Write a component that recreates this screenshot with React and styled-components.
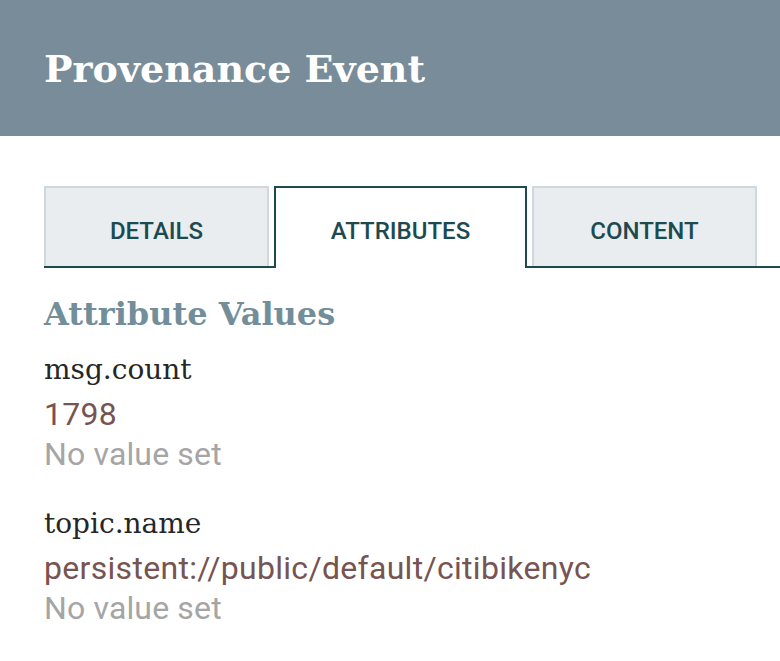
import styled, { createGlobalStyle } from "styled-components";

const GlobalStyle = createGlobalStyle`
  html, body {
    margin: 0;
    padding: 0;
    background: #ffffff;
  }
  body {
    font-family: Roboto, "Liberation Sans", sans-serif;
    overflow: hidden;
  }
`;

const Page = styled.div`
  width: 780px;
  height: 661px;
  overflow: hidden;
  background: #fff;
`;

const Header = styled.header`
  height: 136px;
  background: #798c99;
  display: flex;
  align-items: center;
  padding-left: 44px;
  box-sizing: border-box;
`;

const Title = styled.h1`
  margin: 0;
  font-family: "DejaVu Serif", "Liberation Serif", serif;
  font-weight: 700;
  font-size: 38px;
  color: #ffffff;
`;

const Body = styled.div`
  padding: 50px 0 0 44px;
`;

const TabBar = styled.div`
  display: flex;
  gap: 5px;
  border-bottom: 2px solid #1d4a4f;
  height: 80px;
`;

const Tab = styled.div`
  box-sizing: border-box;
  width: ${(p) => p.$width}px;
  height: ${(p) => (p.$active ? 82 : 80)}px;
  display: flex;
  align-items: center;
  justify-content: center;
  font-family: Roboto, sans-serif;
  font-weight: 500;
  font-size: 24px;
  color: #1d4a4f;
  text-transform: uppercase;
  background: ${(p) => (p.$active ? "#ffffff" : "#e9edf0")};
  border: 2px solid ${(p) => (p.$active ? "#1d4a4f" : "#cfd8dc")};
  border-bottom: none;
  padding-top: ${(p) => (p.$active ? 6 : 7)}px;
`;

const Section = styled.h2`
  margin: 26px 0 0;
  font-family: "DejaVu Serif", "Liberation Serif", serif;
  font-weight: 700;
  font-size: 32px;
  line-height: 40px;
  color: #728e9b;
`;

const AttrList = styled.div`
  display: flex;
  flex-direction: column;
  gap: 30px;
  margin-top: 16px;
`;

const Attr = styled.div`
  display: flex;
  flex-direction: column;
`;

const Name = styled.div`
  font-family: "DejaVu Serif", "Liberation Serif", serif;
  font-size: 28px;
  line-height: 40px;
  margin-bottom: 4px;
  color: #262626;
`;

const Value = styled.div`
  font-family: Roboto, sans-serif;
  font-size: 32px;
  line-height: 40px;
  letter-spacing: ${(p) => (p.$empty ? 0.15 : 0.3)}px;
  color: ${(p) => (p.$empty ? "#a5a5a5" : "#775351")};
`;

const tabs = [
  { label: "Details", width: 225 },
  { label: "Attributes", width: 253, active: true },
  { label: "Content", width: 225 },
];

const attributes = [
  { name: "msg.count", value: "1798" },
  { name: "topic.name", value: "persistent://public/default/citibikenyc" },
];

export default function App() {
  return (
    <Page>
      <GlobalStyle />
      <Header>
        <Title>Provenance Event</Title>
      </Header>
      <Body>
        <TabBar>
          {tabs.map((t) => (
            <Tab key={t.label} $width={t.width} $active={t.active}>
              {t.label}
            </Tab>
          ))}
        </TabBar>
        <Section>Attribute Values</Section>
        <AttrList>
          {attributes.map((a) => (
            <Attr key={a.name}>
              <Name>{a.name}</Name>
              <Value>{a.value}</Value>
              <Value $empty>No value set</Value>
            </Attr>
          ))}
        </AttrList>
      </Body>
    </Page>
  );
}
